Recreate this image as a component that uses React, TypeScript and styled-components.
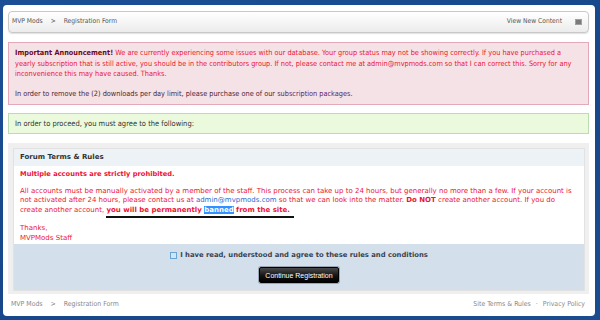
import React from "react"
import styled, { createGlobalStyle } from "styled-components"

const narrow = `"DejaVu Sans Condensed", "Liberation Sans", sans-serif`

const GlobalStyle = createGlobalStyle`
  html, body {
    margin: 0;
    padding: 0;
    background: #17488c;
  }
  body {
    font-family: "DejaVu Sans", Verdana, sans-serif;
    font-size: 7px;
    line-height: 9.5px;
    color: #333;
  }
`

const Page = styled.div`
  width: 600px;
  height: 320px;
  padding: 5px 5px 0 3px;
  box-sizing: border-box;
  background: linear-gradient(160deg, #1b4f95 0%, #17478a 55%, #1a4c90 100%);
`

const Panel = styled.div`
  background: #fff;
  border-radius: 4px;
  padding: 6px 6px 3px 5px;
  display: flex;
  flex-direction: column;
`

const Breadcrumb = styled.div`
  height: 22px;
  box-sizing: border-box;
  border: 1px solid #c8c8c8;
  border-radius: 4px;
  background: linear-gradient(#ffffff, #ececec);
  box-shadow: 0 1px 1px rgba(0, 0, 0, 0.12);
  display: flex;
  align-items: center;
  justify-content: space-between;
  padding: 0 6px 0 3px;
  font-family: ${narrow};
  font-size: 6.7px;
  color: #555;
`

const Crumbs = styled.div<{ $dim?: boolean }>`
  display: flex;
  gap: 8px;
  color: ${(p) => (p.$dim ? "#888" : "#555")};
`

const NavRight = styled.div`
  display: flex;
  align-items: center;
  gap: 13px;
`

const MenuIcon = styled.span`
  width: 5px;
  height: 4px;
  background: #7a7a7a;
  border: 1px solid #a0a0a0;
`

const Notice = styled.div<{ $tone: "red" | "green" }>`
  margin-top: ${(p) => (p.$tone === "red" ? "9px" : "8px")};
  border: 1px solid ${(p) => (p.$tone === "red" ? "#e2a9b8" : "#b9dcb1")};
  background: ${(p) => (p.$tone === "red" ? "#f5e2e6" : "#ebfadc")};
  padding: ${(p) => (p.$tone === "red" ? "5px 5px 4px 6px" : "5px 6px 4px 6px")};
  font-family: ${narrow};
  font-size: ${(p) => (p.$tone === "red" ? "7.3px" : "7.5px")};
  line-height: 10.5px;
  color: #333;
`

const Strong = styled.b<{ $color?: string }>`
  color: ${(p) => p.$color || "inherit"};
`

const RedText = styled.span`
  color: #ec1434;
`

const PlainLine = styled.p`
  margin: 9.5px 0 0;
  color: #4a2535;
`

const Link = styled.a`
  color: #5b2366;
  text-decoration: none;
`

const TermsOuter = styled.div`
  margin-top: 9px;
  background: #efefef;
  padding: 5px 4px 3px 5px;
`

const TermsInner = styled.div`
  background: #fff;
  border: 1px solid #e2e2e2;
`

const TermsHeader = styled.div`
  background: #edf2f6;
  font-weight: bold;
  color: #333;
  padding: 4px 6px 3px;
`

const TermsBody = styled.div`
  padding: 4px 6px 0;
  color: #ec1434;
`

const Para = styled.p`
  margin: 0 0 7.5px;
  &:last-child {
    margin: 0;
    line-height: 10.5px;
  }
`

const Rule = styled.b`
  font-size: 6.7px;
`

const Email = styled.a`
  color: #2b6ad0;
  text-decoration: none;
`

const Marked = styled.span`
  position: relative;
  font-weight: bold;
  &::after {
    content: "";
    position: absolute;
    left: 0;
    right: -4px;
    bottom: -4px;
    height: 2px;
    background: #111;
  }
`

const Selected = styled.span`
  background: #3390ff;
  color: #fff;
`

const AgreeArea = styled.div`
  background: #d3dfeb;
  display: flex;
  flex-direction: column;
  align-items: center;
  padding: 7px 0 7px;
  gap: 7px;
`

const AgreeLabel = styled.label`
  display: flex;
  align-items: center;
  gap: 3px;
  font-weight: bold;
  color: #3a4350;
  font-size: 6.8px;
`

const Box = styled.span`
  width: 5px;
  height: 5px;
  border: 1px solid #6aa4d6;
  background: #cfe6f8;
`

const Button = styled.button`
  font-family: "Liberation Sans", Arial, sans-serif;
  font-size: 7px;
  white-space: nowrap;
  color: #fff;
  background: linear-gradient(#4a4a4a, #141414 55%, #000);
  border: 1px solid #000;
  border-radius: 2px;
  box-shadow: 0 0 0 1px #9aa6b4;
  padding: 0;
  height: 16px;
  width: 80px;
`

const Footer = styled.div`
  display: flex;
  justify-content: space-between;
  padding: 6px 4px 3px 3px;
  font-family: ${narrow};
  font-size: 6.9px;
  color: #888;
`

const FooterLinks = styled.div`
  display: flex;
  gap: 5px;
`

export default function App() {
  return (
    <>
      <GlobalStyle />
      <Page>
        <Panel>
          <Breadcrumb>
            <Crumbs>
              <span>MVP Mods</span>
              <span>&gt;</span>
              <span>Registration Form</span>
            </Crumbs>
            <NavRight>
              <span>View New Content</span>
              <MenuIcon />
            </NavRight>
          </Breadcrumb>

          <Notice $tone="red">
            <Strong $color="#6e0a1c">Important Announcement!</Strong>{" "}
            <RedText>
              We are currently experiencing some issues with our database. Your group status may not be
              showing correctly. If you have purchased a yearly subscription that is still active, you
              should be in the contributors group. If not, please contact me at admin@mvpmods.com so that
              I can correct this. Sorry for any inconvenience this may have caused. Thanks.
            </RedText>
            <PlainLine>
              In order to remove the (2) downloads per day limit, please purchase one of our{" "}
              <Link>subscription packages</Link>.
            </PlainLine>
          </Notice>

          <Notice $tone="green">In order to proceed, you must agree to the following:</Notice>

          <TermsOuter>
            <TermsInner>
              <TermsHeader>Forum Terms &amp; Rules</TermsHeader>
              <TermsBody>
                <Para>
                  <Rule>Multiple accounts are strictly prohibited.</Rule>
                </Para>
                <Para>
                  All accounts must be manually activated by a member of the staff. This process can take
                  up to 24 hours, but generally no more than a few. If your account is not activated after
                  24 hours, please contact us at <Email>admin@mvpmods.com</Email> so that we can look into
                  the matter. <b>Do NOT</b> create another account. If you do create another account,{" "}
                  <Marked>
                    you will be permanently <Selected>banned</Selected> from the site.
                  </Marked>
                </Para>
                <Para>
                  Thanks,
                  <br />
                  MVPMods Staff
                </Para>
              </TermsBody>
              <AgreeArea>
                <AgreeLabel>
                  <Box />I have read, understood and agree to these rules and conditions
                </AgreeLabel>
                <Button>Continue Registration</Button>
              </AgreeArea>
            </TermsInner>
          </TermsOuter>

          <Footer>
            <Crumbs $dim>
              <span>MVP Mods</span>
              <span>&gt;</span>
              <span>Registration Form</span>
            </Crumbs>
            <FooterLinks>
              <span>Site Terms &amp; Rules</span>
              <span>·</span>
              <span>Privacy Policy</span>
            </FooterLinks>
          </Footer>
        </Panel>
      </Page>
    </>
  )
}
